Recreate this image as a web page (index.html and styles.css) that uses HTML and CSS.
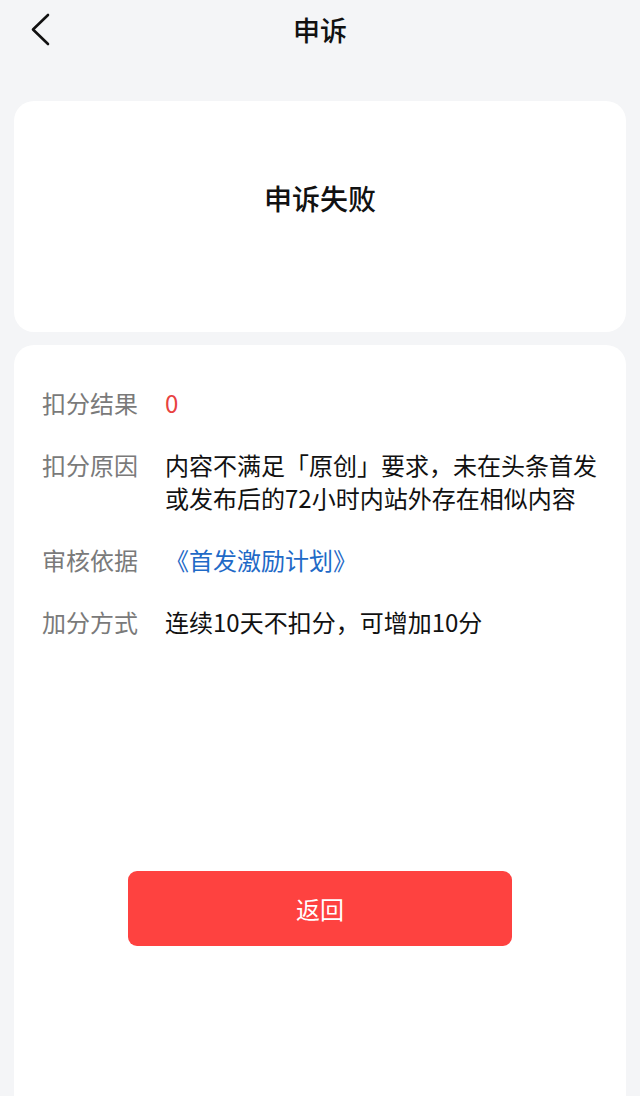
FILE: index.html
```html
<!DOCTYPE html>
<html lang="zh-CN">
<head>
<meta charset="utf-8">
<title>申诉</title>
<link rel="stylesheet" href="styles.css">
</head>
<body>
<header class="nav">
  <span class="back">
    <svg width="22" height="34" viewBox="0 0 22 34" aria-hidden="true">
      <path d="M19 2 L4 16.5 L19 31" fill="none" stroke="#111" stroke-width="2.6" stroke-linecap="round" stroke-linejoin="round"/>
    </svg>
  </span>
  <h1 class="nav-title">申诉</h1>
</header>
<main class="content">
  <section class="card status-card">
    <h2 class="status">申诉失败</h2>
  </section>
  <section class="card detail-card">
    <div class="rows">
      <div class="row">
        <div class="label">扣分结果</div>
        <div class="value red">0</div>
      </div>
      <div class="row">
        <div class="label">扣分原因</div>
        <div class="value">内容不满足「原创」要求，未在头条首发或发布后的72小时内站外存在相似内容</div>
      </div>
      <div class="row">
        <div class="label">审核依据</div>
        <div class="value link">《首发激励计划》</div>
      </div>
      <div class="row">
        <div class="label">加分方式</div>
        <div class="value">连续10天不扣分，可增加10分</div>
      </div>
    </div>
    <div class="actions">
      <button class="btn" type="button">返回</button>
    </div>
  </section>
</main>
</body>
</html>
```
FILE: styles.css
```css
* { box-sizing: border-box; }
html, body { margin: 0; padding: 0; }
body {
  background: #f4f5f7;
  font-family: "Noto Sans CJK SC", "Noto Sans", sans-serif;
  color: #111;
  height: 1096px;
  overflow: hidden;
}
.nav {
  position: relative;
  height: 60px;
  display: flex;
  align-items: center;
  justify-content: center;
}
.back {
  position: absolute;
  left: 29px;
  top: 13px;
  width: 22px;
  height: 34px;
  display: block;
}
.back svg { display: block; }
.nav-title {
  margin: 0;
  font-size: 27px;
  font-weight: 500;
  line-height: 58px;
}
.content {
  padding: 41px 14px 0;
  display: flex;
  flex-direction: column;
  gap: 13px;
}
.card {
  background: #fff;
  border-radius: 20px;
}
.status-card {
  height: 231px;
  padding-top: 79px;
  text-align: center;
}
.status {
  margin: 0;
  font-size: 28px;
  font-weight: 500;
  line-height: 36px;
}
.detail-card {
  height: 751px;
  border-radius: 20px 20px 0 0;
  padding: 41px 20px 0 28px;
}
.rows {
  display: flex;
  flex-direction: column;
  gap: 29px;
}
.row {
  display: flex;
  font-size: 24px;
  line-height: 33px;
}
.label {
  width: 123px;
  flex: none;
  color: #7a7a7a;
}
.value { flex: 1; color: #111; }
.value.red { color: #e8423f; }
.value.link { color: #1f6ac7; }
.actions {
  margin-top: 233px;
  display: flex;
  justify-content: center;
}
.btn {
  width: 384px;
  height: 75px;
  margin-left: -8px;
  border: none;
  border-radius: 9px;
  background: #fe4240;
  color: #fff;
  font-family: "Noto Sans CJK SC", "Noto Sans", sans-serif;
  font-size: 24px;
  font-weight: 400;
}
```
